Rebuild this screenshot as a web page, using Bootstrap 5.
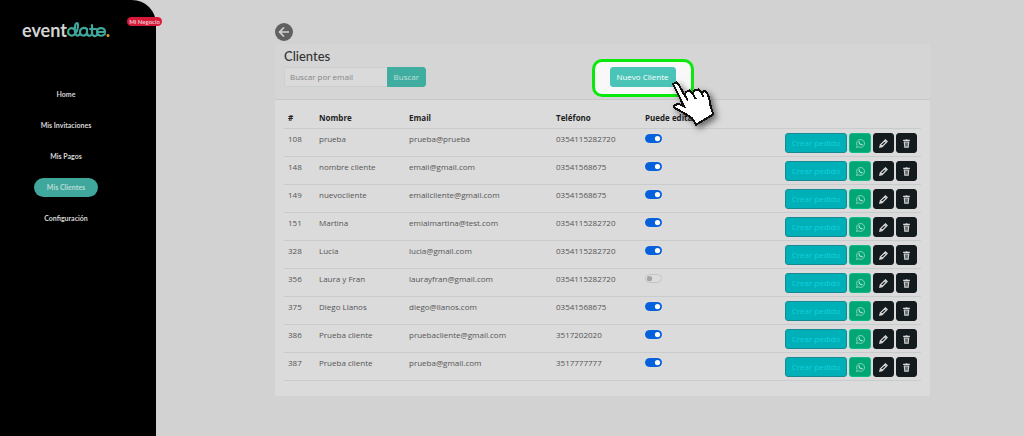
<!DOCTYPE html>
<html lang="es">
<head>
<meta charset="utf-8">
<meta name="viewport" content="width=device-width, initial-scale=1">
<title>eventdate - Clientes</title>
<link href="https://cdn.jsdelivr.net/npm/bootstrap@5.3.0/dist/css/bootstrap.min.css" rel="stylesheet">
<style>
body{background:#d2d2d2;font-family:"Open Sans",Lato,sans-serif;font-size:8px;line-height:12px;color:#555}
.sidebar{width:156px;background:#000;border-top-right-radius:24px;font-family:Lato,sans-serif}
.brand{margin:20px 0 0 22px}
.biz{top:17px;right:-6px;background:#d9193a;color:#e8c4ca;font-size:6px;line-height:9px;font-weight:700;padding:0 2px;border-radius:5px}
.menu{margin-top:43px;gap:12px;width:132px}
.menu .nav-link{font-size:7px;line-height:19px;padding:0 13px;color:#d6d6d6;font-weight:700;border-radius:10px}
.menu .nav-link.active{background:#3fa79b;color:#b8dcd8}
.content{padding:23px 94px 0 119px}
.panel{background:#dbdbdb;margin-top:3px;border-radius:2px}
.panel-top{background:#d5d5d5;border-bottom:1px solid #c9c9c9;padding:4px 2px 12px}
.panel-top .row>*{padding:0 7px}
h1{font-family:Lato,sans-serif;font-size:13px;line-height:17px;margin:0 0 2px;color:#333}
.search{width:142px;height:20px}
.search .form-control{font-size:8px;line-height:12px;padding:3px 5px;background:#dadada;border-color:#cacfcf;border-radius:2px;min-height:0}
.search .form-control::placeholder{color:#858585}
.btn{font-size:8px;line-height:12px;padding:3px 6px;border-radius:3px}
.btn-teal,.btn-teal:hover{background:#3fad9f;color:#c4e0dc;border-color:#3fad9f}
.spot::before{content:"";position:absolute;inset:-8px -18px -10px;background:#f8f8f8;border:3px solid #0be80b;border-radius:10px}
.btn-new,.btn-new:hover{position:relative;background:#4bc4b8;border-color:#4bc4b8;color:#fff;width:66px;height:20px;padding:0}
.hand{position:absolute;left:60px;top:13px;z-index:2;filter:drop-shadow(3px 3px 3px #0008)}
.table-box{padding:8px 9px 15px}
.clients{--bs-table-bg:transparent;--bs-table-color:#555;table-layout:fixed;margin:0;border-color:#c9cccc}
.clients th{color:#1f1f1f;font-weight:700;padding:4px;white-space:nowrap}
.clients td{padding:4px 4px 3px;white-space:nowrap}
.c-id{width:31px}.c-name{width:90px}.c-mail{width:147px}.c-tel{width:89px}.c-edit{width:120px}
.clients .form-switch{padding:0;min-height:0;margin:1px 0 0}
.clients .form-check-input{float:none;display:block;width:17px;height:9px;margin:0;background-color:#dbdbdb;border-color:#c5c5c5}
.clients .form-check-input:checked{background-color:#0560dc;border-color:#0560dc}
.acts{gap:2px}
.acts .btn{height:20px;width:22px;padding:0;display:flex;align-items:center;justify-content:center}
.acts .btn-order{width:62px;background:#00b0b9;border:1px solid #178a91;color:#14d0dc}
.acts .btn-wa{background:#00a676;border-color:#12b98b;color:#a5e0ce}
.acts .btn-ink{background:#141b1f;border-color:#141b1f;color:#d8d8d8;width:21px}
</style>
</head>
<body>
<svg class="d-none" aria-hidden="true">
<symbol id="wa" viewBox="0 0 16 16"><path fill="none" stroke="currentColor" stroke-width="1.4" d="M1 15l1-3.7A7 7 0 1 1 4.700 14z"/><path fill="currentColor" d="M5 4l1.300 0 .8 1.800-.7 1c.7 1.200 1.500 2 2.800 2.500l.9-1 1.900.9c0 1.500-1 2.200-2.200 2.100C7 11 4.300 8 4.200 5.800z"/></symbol>
<symbol id="pen" viewBox="0 0 16 16"><path fill="none" stroke="currentColor" stroke-width="2.200" d="M1.500 14.500l1-4L11.500 1.500l3 3L5.500 13.500zM9.500 3.500l3 3M3 10l3 3"/></symbol>
<symbol id="bin" viewBox="0 0 16 16"><path fill="currentColor" d="M2 1.500h4L7 .5h2l1 1h4v2H2zM3 4.500h10l-1 11H4z"/><path stroke="#141b1f" d="M6 6v7.500M8 6v7.500M10 6v7.500"/></symbol>
</svg>
<div class="d-flex min-vh-100">
<aside class="sidebar position-relative flex-shrink-0">
<a href="#" class="brand d-block" aria-label="eventdate"><svg width="90" height="22" viewBox="0 0 90 22"><text x="0" y="17" font-family="Lato" font-weight="700" font-size="18" fill="#d4d4d4">event</text><g fill="none" stroke="#3fa79b" stroke-width="2.200" stroke-linecap="round" stroke-linejoin="round"><path d="M52 9c-3-2-6 0-6 3s4 5 7 2c3-3 4-11 2-11s-2.500 5-2 9c.3 4 3 4.500 5 2"/><path d="M65 9c-3-2-7-1-7 3s5 5 7 1V9v4c.5 3 3 4 5 1V5v8c0 3 3 4 5 2M68 9h6M75 12h8c0-5-7-5-8-1-.5 5 5 6 8 3"/></g><circle cx="86" cy="15.500" r="1.500" fill="#d5a021"/></svg></a>
<span class="biz position-absolute">Mi Negocio</span>
<nav class="menu nav flex-column align-items-center">
<a class="nav-link" href="#">Home</a><a class="nav-link" href="#">Mis Invitaciones</a><a class="nav-link" href="#">Mis Pagos</a><a class="nav-link active" href="#">Mis Clientes</a><a class="nav-link" href="#">Configuración</a>
</nav>
</aside>
<main class="content flex-grow-1">
<a href="#" class="d-block" aria-label="Volver"><svg class="d-block" width="18" height="18" viewBox="0 0 18 18"><circle cx="9" cy="9" r="9" fill="#606060"/><path d="M14 9H5M9 4.500L4.500 9 9 13.500" fill="none" stroke="#d2d2d2" stroke-width="1.700"/></svg></a>
<section class="panel">
<header class="panel-top"><div class="row g-0 align-items-end">
<div class="col-6"><h1>Clientes</h1><form class="input-group search flex-nowrap"><input class="form-control" type="text" placeholder="Buscar por email" aria-label="Buscar por email"><button class="btn btn-teal" type="button">Buscar</button></form></div>
<div class="col-6 d-flex"><div class="spot position-relative"><button class="btn btn-new d-block" type="button">Nuevo Cliente</button>
<svg class="hand" width="50" height="50" viewBox="0 0 150 150" aria-hidden="true"><path d="M9 12L20 7l9 12 15 27 4-10 10-5 10 9 6-10 12-2 8 10 10-6 8 9 6 15 2 16 10 31-52 31-12-20-26-16-26-14-2-7 12-6 18 8z" fill="#fff" stroke="#111" stroke-width="6" shape-rendering="crispEdges"/><path d="M44 45l10 17M68 40l9 17M94 38l6 13" stroke="#111" stroke-width="6" shape-rendering="crispEdges"/></svg></div></div>
</div></header>
<div class="table-box">
<table class="table clients"><thead><tr><th class="c-id">#</th><th class="c-name">Nombre</th><th class="c-mail">Email</th><th class="c-tel">Teléfono</th><th class="c-edit">Puede editar</th><th></th></tr></thead><tbody id="rows"></tbody></table>
</div>
</section>
</main>
</div>
<script src="https://cdn.jsdelivr.net/npm/bootstrap@5.3.0/dist/js/bootstrap.bundle.min.js"></script>
<script>
const clients=[[108,'prueba','prueba@prueba','0354115282720',1],[148,'nombre cliente','email@gmail.com','03541568675',1],[149,'nuevocliente','emailcliente@gmail.com','03541568675',1],[151,'Martina','emialmartina@test.com','0354115282720',1],[328,'Lucia','lucia@gmail.com','0354115282720',1],[356,'Laura y Fran','laurayfran@gmail.com','0354115282720',0],[375,'Diego Llanos','diego@llanos.com','03541568675',1],[386,'Prueba cliente','pruebacliente@gmail.com','3517202020',1],[387,'Prueba cliente','prueba@gmail.com','3517777777',1]];
const icon=n=>`<svg width="9" height="9"><use href="#${n}"/></svg>`;
document.getElementById('rows').innerHTML=clients.map(([id,n,m,t,e])=>`<tr><td>${id}</td><td>${n}</td><td>${m}</td><td>${t}</td><td><div class="form-check form-switch"><input class="form-check-input" type="checkbox" role="switch" aria-label="Puede editar ${n}" ${e?'checked':''}></div></td><td><div class="acts d-flex justify-content-end"><button class="btn btn-order">Crear pedido</button><button class="btn btn-wa" aria-label="WhatsApp">${icon('wa')}</button><button class="btn btn-ink" aria-label="Editar">${icon('pen')}</button><button class="btn btn-ink" aria-label="Eliminar">${icon('bin')}</button></div></td></tr>`).join('');
</script>
</body>
</html>
